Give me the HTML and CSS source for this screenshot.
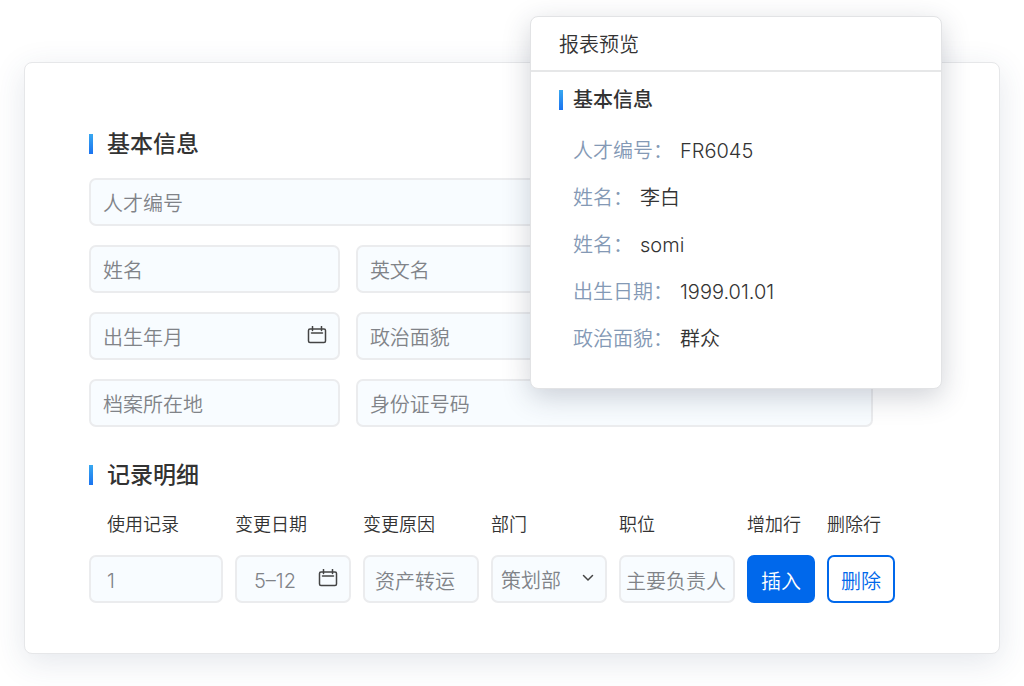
FILE: index.html
```
<!DOCTYPE html>
<html lang="zh-CN">
<head>
    <meta charset="UTF-8">
    <meta name="viewport" content="width=device-width, initial-scale=1.0">
    <title>基本信息</title>
    <link rel="stylesheet" href="styles.css">
</head>
<body>
    <div class="page">
        <form class="card">
            <h2 class="section-title">基本信息</h2>
            <div class="form-grid">
                <input class="field wide" type="text" id="talentNo" aria-label="人才编号" placeholder="人才编号">
                <input class="field" type="text" id="name" aria-label="姓名" placeholder="姓名">
                <input class="field" type="text" id="englishName" aria-label="英文名" placeholder="英文名">
                <div class="icon-field">
                    <input class="field" type="text" id="birth" aria-label="出生年月" placeholder="出生年月">
                    <svg class="calendar" viewBox="0 0 20 18" aria-hidden="true">
                        <rect x="1.5" y="3" width="17" height="13.5" rx="1.5"/>
                        <path d="M5.5 0.5v4M14.5 0.5v4M4.500 7h11"/>
                    </svg>
                </div>
                <input class="field" type="text" id="politics" aria-label="政治面貌" placeholder="政治面貌">
                <input class="field" type="text" id="archive" aria-label="档案所在地" placeholder="档案所在地">
                <input class="field" type="text" id="idNumber" aria-label="身份证号码" placeholder="身份证号码">
            </div>

            <h2 class="section-title">记录明细</h2>
            <table class="records">
                <colgroup>
                    <col>
                    <col class="col-field">
                    <col class="col-field">
                    <col class="col-field">
                    <col class="col-field">
                    <col class="col-insert">
                    <col class="col-delete">
                </colgroup>
                <thead>
                    <tr>
                        <th class="first" id="colRecord">使用记录</th>
                        <th id="colDate">变更日期</th>
                        <th id="colReason">变更原因</th>
                        <th id="colDept">部门</th>
                        <th id="colPost">职位</th>
                        <th>增加行</th>
                        <th>删除行</th>
                    </tr>
                </thead>
                <tbody>
                    <tr>
                        <td><input class="field record" type="text" aria-labelledby="colRecord" value="1"></td>
                        <td>
                            <div class="icon-field">
                                <input class="field date" type="text" aria-labelledby="colDate" value="5–12">
                                <svg class="calendar" viewBox="0 0 20 18" aria-hidden="true">
                                    <rect x="1.5" y="3" width="17" height="13.5" rx="1.5"/>
                                    <path d="M5.5 0.5v4M14.5 0.5v4M4.500 7h11"/>
                                </svg>
                            </div>
                        </td>
                        <td><input class="field reason" type="text" aria-labelledby="colReason" value="资产转运"></td>
                        <td>
                            <div class="icon-field">
                                <select class="field dept" aria-labelledby="colDept">
                                    <option>策划部</option>
                                </select>
                                <svg class="chevron" viewBox="0 0 12 8" aria-hidden="true">
                                    <path d="M1.5 1.5L6 6L10.5 1.5"/>
                                </svg>
                            </div>
                        </td>
                        <td><input class="field post" type="text" aria-labelledby="colPost" value="主要负责人"></td>
                        <td><button class="btn btn-insert" type="button">插入</button></td>
                        <td><button class="btn btn-delete" type="button">删除</button></td>
                    </tr>
                </tbody>
            </table>
        </form>

        <section class="preview">
            <h3 class="preview-header">报表预览</h3>
            <div class="preview-body">
                <h4 class="preview-title">基本信息</h4>
                <dl class="info">
                    <div><dt>人才编号：</dt><dd>FR6045</dd></div>
                    <div><dt>姓名：</dt><dd>李白</dd></div>
                    <div><dt>姓名：</dt><dd>somi</dd></div>
                    <div><dt>出生日期：</dt><dd>1999.01.01</dd></div>
                    <div><dt>政治面貌：</dt><dd>群众</dd></div>
                </dl>
            </div>
        </section>
    </div>
</body>
</html>
```
FILE: styles.css
```
* {
    box-sizing: border-box;
}
body {
    margin: 0;
    background: #fff;
    color: #333;
    font-family: Inter, "Noto Sans CJK SC", sans-serif;
    font-size: 20px;
    font-weight: 350;
}
.page {
    position: relative;
    padding: 62px 24px 32px;
}
.card {
    padding: 65px 104px 50px 64px;
    background: #fff;
    border: 1px solid #e6e7e9;
    border-radius: 8px;
    box-shadow: 0 8px 32px rgba(50, 70, 110, 0.13);
}

/* Headings with the blue bar */
.section-title, .preview-title {
    display: flex;
    align-items: center;
    margin: 0;
    font-weight: 500;
}
.section-title {
    gap: 14px;
    font-size: 23px;
    line-height: 32px;
}
.section-title::before, .preview-title::before {
    content: "";
    width: 4px;
    height: 20px;
    background: linear-gradient(#38a8f0, #1a73f0);
}

/* Form fields */
.form-grid {
    display: grid;
    grid-template-columns: 32% 1fr;
    gap: 19px 16px;
    margin: 18px 22px 32px 0;
}
.wide {
    grid-column: 1 / -1;
}
.field {
    display: block;
    width: 100%;
    height: 48px;
    padding: 3px 12px 0;
    background: #f8fcff;
    border: 2px solid #ebecee;
    border-radius: 7px;
    color: #808388;
    font: inherit;
    appearance: none;
}
.field::placeholder {
    color: #808388;
    opacity: 1;
}
.icon-field {
    position: relative;
}
.calendar, .chevron {
    position: absolute;
    fill: none;
    stroke: #444;
    stroke-width: 1.5;
    stroke-linecap: round;
    pointer-events: none;
}
.calendar {
    top: 14px;
    right: 13px;
    width: 20px;
    height: 18px;
}
.chevron {
    top: 19px;
    right: 13px;
    width: 12px;
    height: 8px;
}

/* Record table */
.records {
    width: 100%;
    margin-top: 22px;
    border-collapse: collapse;
    table-layout: fixed;
}
.col-field {
    width: 128px;
}
.col-insert {
    width: 80px;
}
.col-delete {
    width: 68px;
}
.records th {
    padding: 0 0 18px;
    font-size: 18px;
    font-weight: 350;
    line-height: 24px;
    text-align: left;
    white-space: nowrap;
}
.records th.first {
    padding-left: 18px;
}
.records td {
    padding: 0 12px 0 0;
}
.records td:last-child {
    padding-right: 0;
}
.record {
    padding: 3px 16px 0;
}
.date {
    padding: 3px 34px 0 17px;
}
.reason {
    padding: 3px 10px 0;
}
.dept {
    padding: 3px 24px 0 8px;
}
.post {
    padding: 3px 5px 0;
}
.btn {
    display: block;
    width: 100%;
    height: 48px;
    padding: 2px 0 0;
    border: 2px solid #0068eb;
    border-radius: 7px;
    font: inherit;
    cursor: pointer;
}
.btn-insert {
    background: #0068eb;
    color: #fff;
}
.btn-delete {
    background: #fff;
    color: #0068eb;
}

/* Report preview */
.preview {
    position: absolute;
    top: 16px;
    right: 82px;
    width: 412px;
    background: #fff;
    border: 1px solid #e2e3e5;
    border-radius: 8px;
    box-shadow: 0 8px 28px rgba(40, 50, 75, 0.22);
}
.preview-header {
    margin: 0;
    padding: 13px 28px 10px;
    border-bottom: 2px solid #e6e7e8;
    font-size: 20px;
    font-weight: 350;
    line-height: 30px;
}
.preview-body {
    padding: 13px 28px 25px;
}
.preview-title {
    gap: 10px;
    font-size: 20px;
    line-height: 30px;
}
.info {
    margin: 13px 0 0 14px;
}
.info div {
    display: flex;
    gap: 7px;
    line-height: 47px;
}
.info dt {
    color: #8499b5;
}
.info dd {
    margin: 0;
}
```
